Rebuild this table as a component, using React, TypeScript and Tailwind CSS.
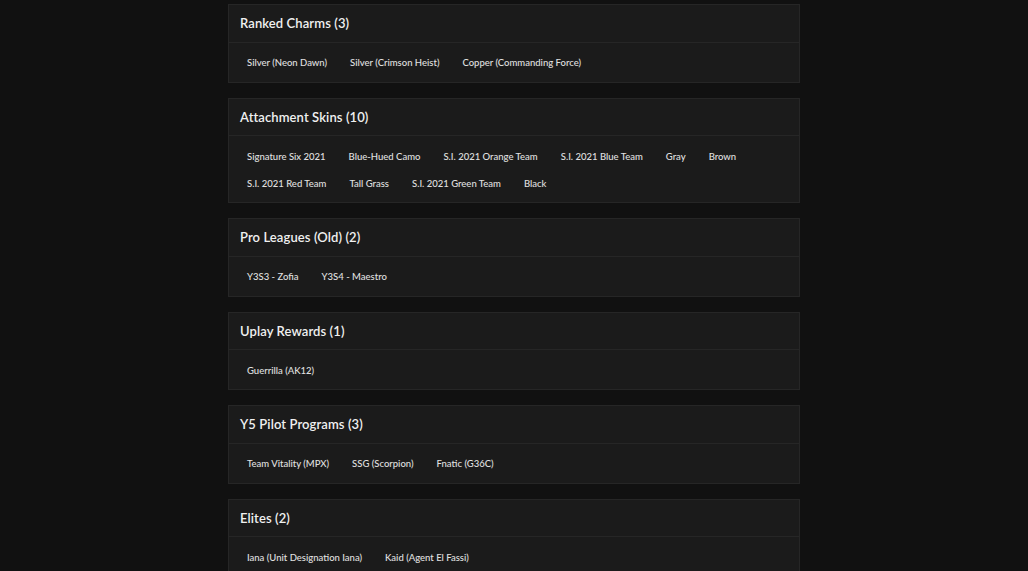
const sections: { title: string; items: string[] }[] = [
  { title: "Ranked Charms (3)", items: ["Silver (Neon Dawn)", "Silver (Crimson Heist)", "Copper (Commanding Force)"] },
  {
    title: "Attachment Skins (10)",
    items: [
      "Signature Six 2021",
      "Blue-Hued Camo",
      "S.I. 2021 Orange Team",
      "S.I. 2021 Blue Team",
      "Gray",
      "Brown",
      "S.I. 2021 Red Team",
      "Tall Grass",
      "S.I. 2021 Green Team",
      "Black",
    ],
  },
  { title: "Pro Leagues (Old) (2)", items: ["Y3S3 - Zofia", "Y3S4 - Maestro"] },
  { title: "Uplay Rewards (1)", items: ["Guerrilla (AK12)"] },
  { title: "Y5 Pilot Programs (3)", items: ["Team Vitality (MPX)", "SSG (Scorpion)", "Fnatic (G36C)"] },
  { title: "Elites (2)", items: ["Iana (Unit Designation Iana)", "Kaid (Agent El Fassi)"] },
];

export default function App() {
  return (
    <div
      className="min-h-screen bg-[#111111] pt-[4px] text-[#e6e6e6]"
      style={{ fontFamily: 'Lato, "Open Sans", sans-serif' }}
    >
      <div className="mx-auto flex w-[572px] flex-col gap-[15px]">
        {sections.map((s) => (
          <div key={s.title} className="border border-[#262626] bg-[#1b1b1b]">
            {/* header */}
            <div className="flex h-[37.5px] items-center border-b border-[#262626] px-[11px] pt-[1px]">
              <h2 className="text-[13px] font-semibold tracking-[0.1px] text-[#f0f0f0]">{s.title}</h2>
            </div>
            {/* items */}
            <div className="flex flex-wrap gap-x-[23px] px-[18px] pt-[7.5px] pb-[4.5px]">
              {s.items.map((it) => (
                <span key={it} className="flex h-[27px] items-center text-[9.5px] font-medium text-[#e0e0e0]">
                  {it}
                </span>
              ))}
            </div>
          </div>
        ))}
      </div>
    </div>
  );
}
